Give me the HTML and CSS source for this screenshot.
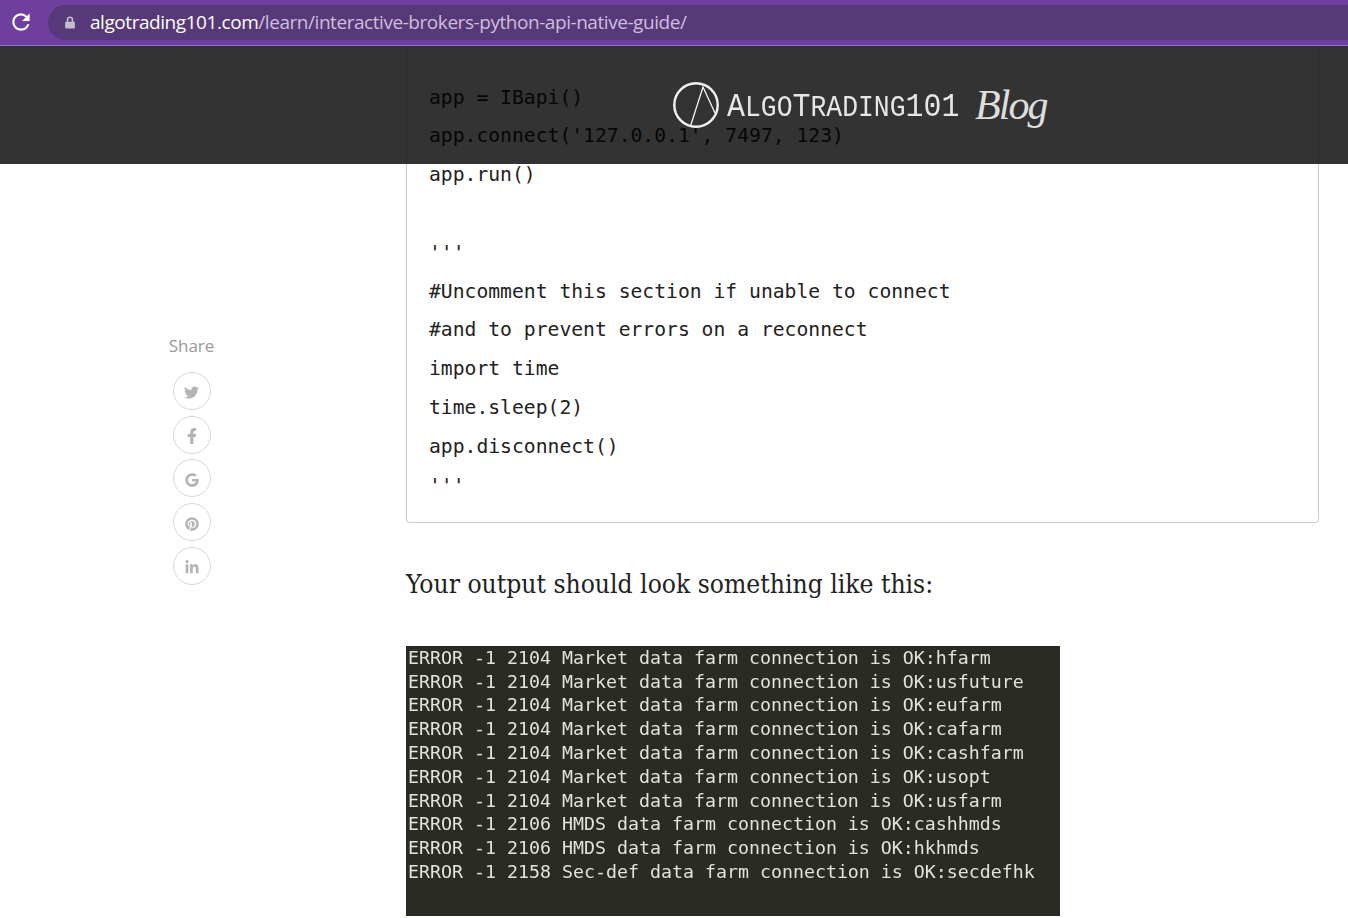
FILE: index.html
```html
<!DOCTYPE html>
<html lang="en">
<head>
<meta charset="utf-8">
<title>Interactive Brokers Python API</title>
<link rel="stylesheet" href="styles.css">
</head>
<body>
<div class="chrome">
  <svg class="reload" viewBox="0 0 24 24"><path d="M17.65 6.35A7.958 7.958 0 0 0 12 4c-4.42 0-7.99 3.58-7.99 8s3.57 8 7.99 8c3.73 0 6.84-2.55 7.73-6h-2.08A5.99 5.99 0 0 1 12 18c-3.31 0-6-2.69-6-6s2.69-6 6-6c1.66 0 3.14.69 4.22 1.78L13 11h7V4l-2.35 2.35z"/></svg>
  <div class="omnibox">
    <svg class="lock" viewBox="0 0 12 16"><path d="M2 7V4.5a4 4 0 0 1 8 0V7h1a1 1 0 0 1 1 1v6.500a1 1 0 0 1-1 1H1a1 1 0 0 1-1-1V8a1 1 0 0 1 1-1zm2 0h4V4.500a2 2 0 0 0-4 0z"/></svg>
    <span class="url"><span class="domain">algotrading101.com</span>/learn/interactive-brokers-python-api-native-guide/</span>
  </div>
</div>
<div class="page">
  <header class="site-header">
    <svg class="logo-mark" viewBox="0 0 48 48"><circle cx="24" cy="24" r="21.700"/><path class="thin" d="M18.500 45 31 6 43 32"/></svg>
    <span class="logo-name"><span class="big">A</span>LGO<span class="big">T</span>RADING<span class="big">101</span></span>
    <span class="logo-blog">Blog</span>
  </header>
  <aside class="sidebar">
    <div class="share">
      <div class="share-label">Share</div>
      <a class="share-btn"><svg class="ico-tw" viewBox="0 0 512 512"><path d="M459.37 151.716c.325 4.548.325 9.097.325 13.645 0 138.72-105.583 298.558-298.558 298.558-59.452 0-114.68-17.219-161.137-47.106 8.447.974 16.568 1.299 25.34 1.299 49.055 0 94.213-16.568 130.274-44.832-46.132-.975-84.792-31.188-98.112-72.772 6.498.974 12.995 1.624 19.818 1.624 9.421 0 18.843-1.3 27.614-3.573-48.081-9.747-84.143-51.98-84.143-102.985v-1.299c13.969 7.797 30.214 12.67 47.431 13.319-28.264-18.843-46.781-51.005-46.781-87.391 0-19.492 5.197-37.36 14.294-52.954 51.655 63.675 129.3 105.258 216.365 109.807-1.624-7.797-2.599-15.918-2.599-24.04 0-57.828 46.782-104.934 104.934-104.934 30.213 0 57.502 12.67 76.67 33.137 23.715-4.548 46.456-13.645 66.599-25.34-7.798 24.366-24.366 44.833-46.132 57.828 21.117-2.273 41.584-8.122 60.426-16.243-14.292 20.791-32.161 39.308-52.628 54.253z"/></svg></a>
      <a class="share-btn"><svg class="ico-fb" viewBox="0 0 320 512"><path d="M279.14 288l14.22-92.66h-88.91v-60.13c0-25.35 12.42-50.06 52.24-50.06h40.42V6.26S260.43 0 225.36 0c-73.22 0-121.08 44.38-121.08 124.72v70.62H22.89V288h81.39v224h100.17V288z"/></svg></a>
      <a class="share-btn"><svg class="ico-g" viewBox="0 0 488 512"><path d="M488 261.8C488 403.3 391.1 504 248 504 110.8 504 0 393.2 0 256S110.8 8 248 8c66.8 0 123 24.5 166.3 64.9l-67.5 64.9C258.5 52.6 94.3 116.6 94.3 256c0 86.5 69.1 156.6 153.7 156.6 98.2 0 135-70.4 140.8-106.9H248v-85.3h236.1c2.3 12.7 3.900 24.900 3.900 41.400z"/></svg></a>
      <a class="share-btn"><svg class="ico-pin" viewBox="0 0 496 512"><path d="M496 256c0 137-111 248-248 248-25.600 0-50.200-3.900-73.400-11.100 10.100-16.500 25.200-43.500 30.800-65 3-11.600 15.400-59 15.400-59 8.100 15.400 31.700 28.500 56.800 28.500 74.800 0 128.700-68.800 128.700-154.300 0-81.900-66.900-143.200-152.900-143.200-107 0-163.900 71.800-163.900 150.100 0 36.400 19.400 81.700 50.300 96.100 4.700 2.200 7.200 1.200 8.300-3.300.8-3.400 5-20.300 6.900-28.100.6-2.500.3-4.700-1.700-7.100-10.100-12.500-18.300-35.300-18.300-56.600 0-54.700 41.400-107.600 112-107.600 60.900 0 103.600 41.500 103.600 100.900 0 67.100-33.900 113.600-78 113.600-24.300 0-42.600-20.100-36.700-44.800 7-29.500 20.500-61.300 20.500-82.600 0-19-10.200-34.900-31.400-34.900-24.900 0-44.900 25.700-44.900 60.200 0 22 7.400 36.800 7.400 36.800s-24.500 103.800-29 123.200c-5 21.400-3 51.600-.9 71.200C65.400 450.900 0 361.100 0 256 0 119 111 8 248 8s248 111 248 248z"/></svg></a>
      <a class="share-btn"><svg class="ico-in" viewBox="0 0 448 512"><path d="M100.280 448H7.400V148.900h92.880zM53.790 108.100C24.090 108.100 0 83.500 0 53.800a53.790 53.790 0 0 1 107.580 0c0 29.700-24.100 54.300-53.790 54.300zM447.900 448h-92.680V302.400c0-34.700-.7-79.200-48.290-79.200-48.290 0-55.690 37.700-55.690 76.700V448h-92.780V148.900h89.080v40.800h1.300c12.400-23.500 42.690-48.300 87.880-48.300 94 0 111.280 61.900 111.280 142.300V448z"/></svg></a>
    </div>
  </aside>
  <main class="content">
<pre class="code">app = IBapi()
app.connect('127.0.0.1', 7497, 123)
app.run()

'''
#Uncomment this section if unable to connect
#and to prevent errors on a reconnect
import time
time.sleep(2)
app.disconnect()
'''</pre>
    <p class="lead">Your output should look something like this:</p>
<pre class="terminal">ERROR -1 2104 Market data farm connection is OK:hfarm
ERROR -1 2104 Market data farm connection is OK:usfuture
ERROR -1 2104 Market data farm connection is OK:eufarm
ERROR -1 2104 Market data farm connection is OK:cafarm
ERROR -1 2104 Market data farm connection is OK:cashfarm
ERROR -1 2104 Market data farm connection is OK:usopt
ERROR -1 2104 Market data farm connection is OK:usfarm
ERROR -1 2106 HMDS data farm connection is OK:cashhmds
ERROR -1 2106 HMDS data farm connection is OK:hkhmds
ERROR -1 2158 Sec-def data farm connection is OK:secdefhk</pre>
  </main>
</div>
</body>
</html>
```
FILE: styles.css
```css
* { box-sizing: border-box; }
html, body { margin: 0; height: 918px; overflow: hidden; background: #fff; }

.chrome {
  height: 46px;
  background: #6e3f9f;
  border-bottom: 1px solid #9a74c4;
  display: flex;
  align-items: flex-start;
  padding: 5px 0 0 8px;
}
.reload { width: 26px; height: 26px; fill: #fff; margin: 4px 14px 0 0; flex: none; }
.omnibox {
  flex: 1;
  height: 35px;
  margin-right: -20px;
  background: #573879;
  border-radius: 18px;
  display: flex;
  align-items: center;
  padding-left: 17px;
}
.lock { width: 10px; height: 13px; fill: #c4bccc; flex: none; margin-right: 15px; }
.url { font: 19px/35px "Open Sans", sans-serif; color: #cdbfdc; letter-spacing: -0.445px; white-space: nowrap; }
.domain { color: #fff; }

.page { position: relative; height: 872px; display: flex; overflow: hidden; }
.site-header {
  position: absolute;
  top: 0; left: 0; right: 0;
  height: 118px;
  background: rgba(0, 0, 0, 0.8);
  display: flex;
  align-items: center;
  padding: 0 0 0 672px;
  color: #eee;
}
.logo-mark { width: 48px; height: 48px; fill: none; stroke: #f2f2f2; stroke-width: 2.4; flex: none; margin-top: -1px; }
.logo-mark .thin { stroke-width: 1.3; }
.logo-name {
  display: inline-block;
  font: 30px/40px "Liberation Mono", monospace;
  transform: scaleX(0.88);
  transform-origin: left center;
  margin: 4px -32px 0 7px;
  white-space: nowrap;
  color: #e6e6e6;
}
.big { font-size: 34px; }
.logo-blog {
  font: italic 42px/60px "Liberation Serif", serif;
  letter-spacing: -2px;
  margin-left: 16px;
  color: #dedede;
}

.sidebar { width: 406px; flex: none; }
.share { width: 383px; padding-top: 288px; display: flex; flex-direction: column; align-items: center; gap: 5.8px; }
.share-label { font: 17px/24px "Open Sans", sans-serif; color: #999; margin-bottom: 8px; }
.share-btn {
  width: 38px; height: 38px;
  padding-top: 3px;
  border: 1px solid #d8d8d8;
  border-radius: 50%;
  display: flex; align-items: center; justify-content: center;
}
.share-btn svg { fill: #b3b3b3; display: block; }
.ico-tw { width: 15px; height: 15px; }
.ico-fb { width: 10px; height: 16px; }
.ico-g { width: 14px; height: 14px; }
.ico-pin { width: 14px; height: 14px; }
.ico-in { width: 14px; height: 15px; }

.content { width: 913px; flex: none; }
.code {
  margin: 0;
  padding: 32.600px 22px 16.600px;
  border: 1px solid #ccc;
  border-top: 0;
  border-radius: 0 0 4px 4px;
  font: 19.700px/38.800px "DejaVu Sans Mono", monospace;
  color: #222;
}
.lead {
  margin: 42px 0 43px;
  font: 26.200px/38px "DejaVu Serif", serif;
  font-stretch: condensed;
  color: #222;
}
.terminal {
  margin: 0;
  width: 654px;
  height: 270px;
  padding: 0 0 0 2px;
  background: #2b2b26;
  color: #e2e2d9;
  font: 18.270px/23.760px "DejaVu Sans Mono", monospace;
  overflow: hidden;
  filter: blur(0.3px);
}
```
